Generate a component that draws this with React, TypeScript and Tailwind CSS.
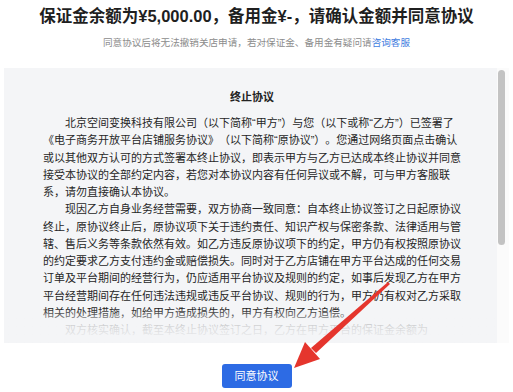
import React from "react";

const font = "font-['Liberation_Sans','Noto_Sans_CJK_SC',sans-serif]";

// Agreement body, paragraphs (the last one fades out under the panel edge)
const paragraphs = [
  "北京空间变换科技有限公司（以下简称“甲方”）与您（以下或称“乙方”）已签署了《电子商务开放平台店铺服务协议》（以下简称“原协议”）。您通过网络页面点击确认或以其他双方认可的方式签署本终止协议，即表示甲方与乙方已达成本终止协议并同意接受本协议的全部约定内容，若您对本协议内容有任何异议或不解，可与甲方客服联系，请勿直接确认本协议。",
  "现因乙方自身业务经营需要，双方协商一致同意：自本终止协议签订之日起原协议终止，原协议终止后，原协议项下关于违约责任、知识产权与保密条款、法律适用与管辖、售后义务等条款依然有效。如乙方违反原协议项下的约定，甲方仍有权按照原协议的约定要求乙方支付违约金或赔偿损失。同时对于乙方店铺在甲方平台达成的任何交易订单及平台期间的经营行为，仍应适用平台协议及规则的约定，如事后发现乙方在甲方平台经营期间存在任何违法违规或违反平台协议、规则的行为，甲方仍有权对乙方采取相关的处理措施，如给甲方造成损失的，甲方有权向乙方追偿。",
  "双方核实确认，截至本终止协议签订之日，乙方在甲方平台的保证金余额为",
];

function Arrow() {
  return (
    <svg
      className="pointer-events-none absolute left-0 top-0"
      width="513"
      height="392"
      viewBox="0 0 513 392"
    >
      <polygon points="388,282 390,284 316,353 311,348" fill="#e5352d" />
      <polygon points="294,368 320,359 305,342" fill="#e5352d" />
    </svg>
  );
}

export default function App() {
  return (
    <div className={`relative w-[513px] h-[392px] bg-white overflow-hidden ${font} [text-spacing-trim:space-all]`}>
      <div className="flex flex-col items-center pt-[4px]">
        <h1 className="text-[16.5px] leading-[24px] font-bold text-[#1f1f1f]">
          保证金余额为¥5,000.00，备用金¥-，请确认金额并同意协议
        </h1>
        <p className="mt-[8px] text-[9.6px] leading-[14px] text-[#8c8c8c]">
          同意协议后将无法撤销关店申请，若对保证金、备用金有疑问请
          <span className="text-[#3f7de0]">咨询客服</span>
        </p>
      </div>

      <div className="mt-[18px] flex px-[4px]">
        <div className="relative w-[493px] h-[275px] overflow-hidden bg-[#f4f5f7] pl-[39px] pt-[21px]">
          <h2 className="w-[418px] text-center text-[11px] leading-[17px] font-bold text-[#222]">
            终止协议
          </h2>
          <div className="mt-[9px] w-[418px] text-[11px] leading-[17.25px] text-[#262626]">
            {paragraphs.map((p, i) => (
              <p key={i} className="indent-[2em]">
                {p}
              </p>
            ))}
          </div>
          <div className="absolute bottom-0 left-0 right-0 h-[34px] bg-gradient-to-b from-[#f4f5f7]/0 via-[#f4f5f7]/85 to-[#f4f5f7]" />
        </div>
        <div className="w-[12px] h-[275px] bg-[#fbfbfb]">
          <div className="ml-[1px] mt-[2px] w-[7px] h-[175px] rounded-full bg-[#c3c3c3]" />
        </div>
      </div>

      <div className="mt-[21px] flex justify-center">
        <button className="w-[70px] h-[24px] rounded-[3px] bg-[#2d6be4] text-[11px] text-white">
          同意协议
        </button>
      </div>

      <Arrow />
    </div>
  );
}
